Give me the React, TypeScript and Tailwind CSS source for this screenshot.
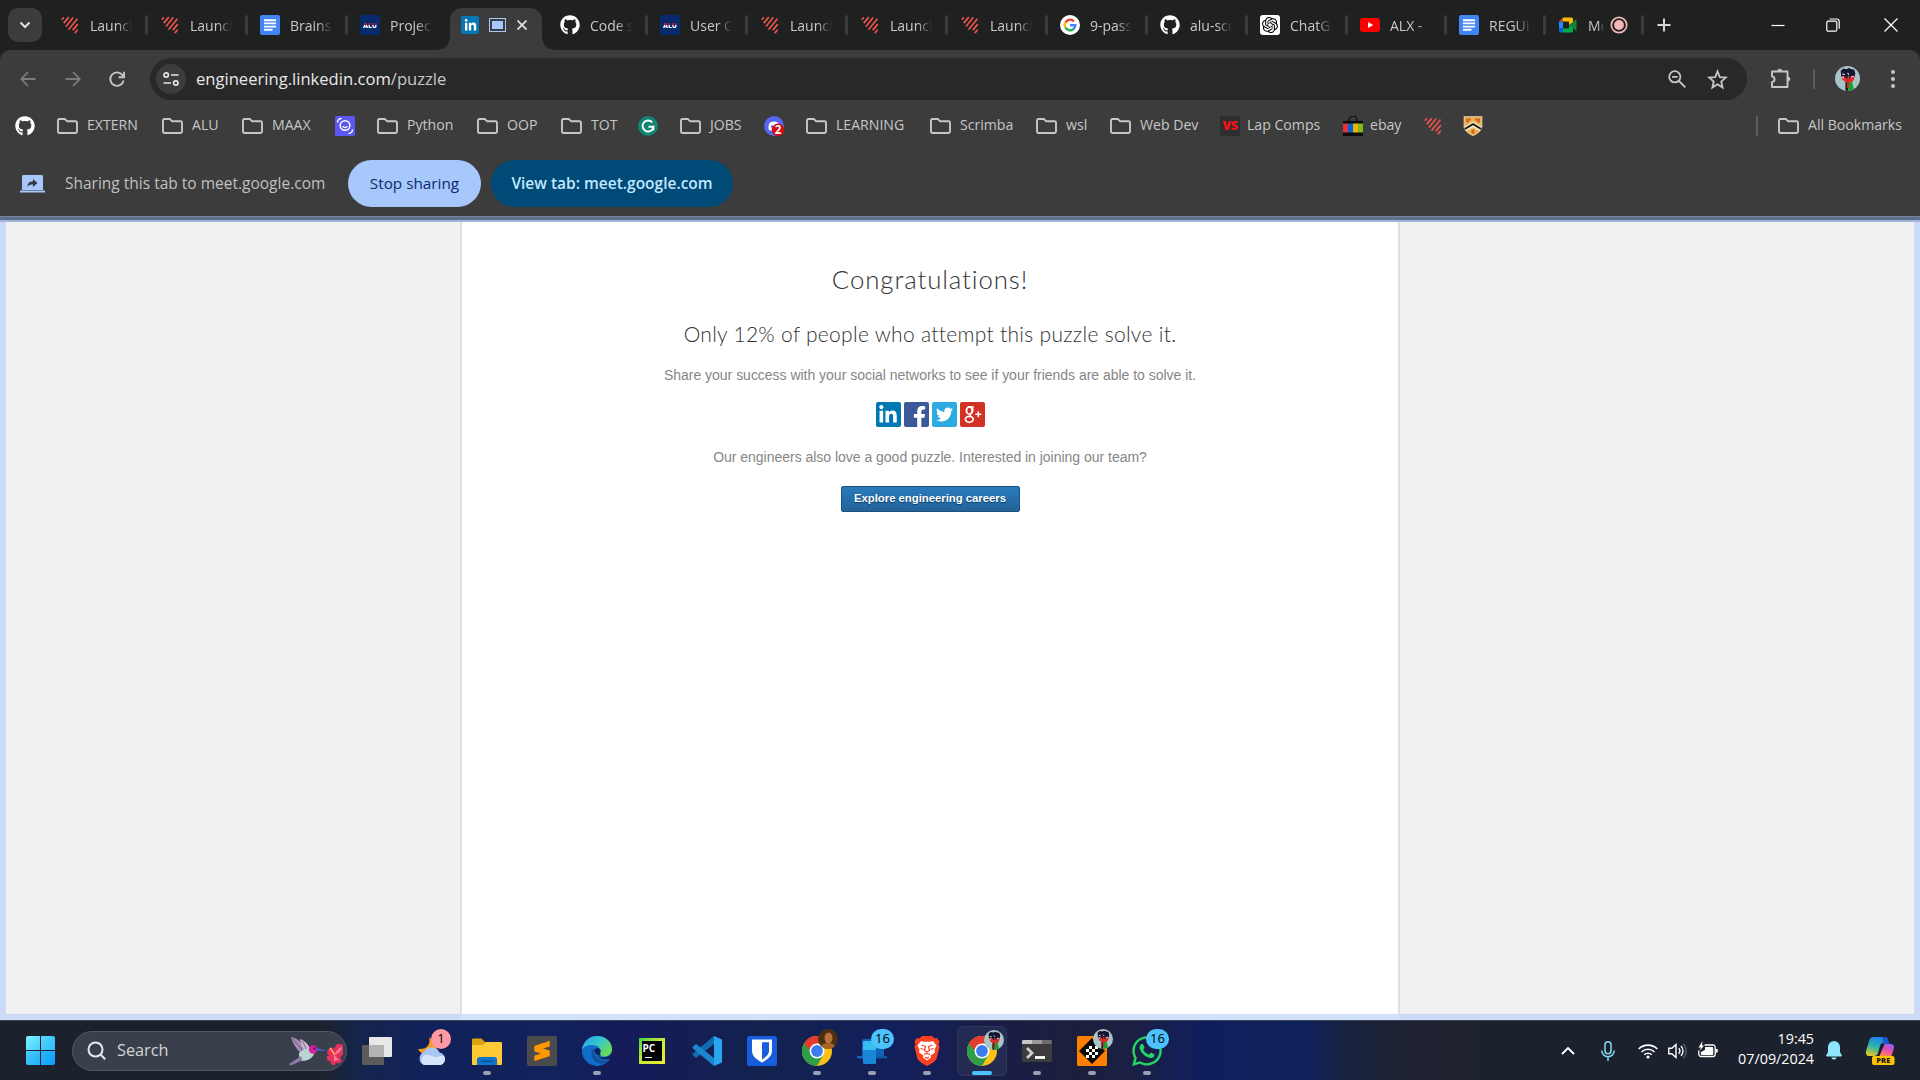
import React from "react";
import { FaGithub, FaLinkedinIn, FaFacebookF, FaTwitter, FaWhatsapp } from "react-icons/fa";
import { SiSublimetext, SiOpenai } from "react-icons/si";

/* ---------- favicons ---------- */

const Stripes = () => (
  <svg viewBox="0 0 20 20" className="size-5 shrink-0" fill="none" stroke="#ef5350" strokeWidth="1.7" strokeLinecap="round">
    <path d="M2.2 4.200 3.400 2.800M4.200 7.600 8.400 2.600M6.400 11 12.800 3M9 14 17 4.200M13.200 14.600 17.400 9.600M15.200 17.600 17.200 15.200" />
  </svg>
);

const Docs = () => (
  <svg viewBox="0 0 20 20" className="size-5 shrink-0">
    <rect width="20" height="20" rx="2" fill="#4285f4" />
    <path d="M4 5.2h12M4 8.4h12M4 11.6h12M4 14.8h8.5" stroke="#fff" strokeWidth="1.9" />
  </svg>
);

const Alu = () => (
  <span className="flex size-5 shrink-0 items-center justify-center bg-[#062a6b] font-['Open_Sans'] text-[7px] leading-none font-extrabold tracking-[-0.2px]">
    <span className="bg-linear-to-b from-[#d8213d] from-50% to-white to-50% bg-clip-text text-transparent">ALU</span>
  </span>
);

const Github = () => <FaGithub className="size-5 shrink-0 text-white" />;

const Google = () => (
  <svg viewBox="0 0 20 20" className="size-5 shrink-0" fill="none" strokeWidth="2.4">
    <circle cx="10" cy="10" r="10" fill="#fff" />
    <path d="M13.9 6.4A5.3 5.3 0 0 0 5.5 7.3" stroke="#ea4335" />
    <path d="M5.5 7.3a5.3 5.3 0 0 0 0 5.4" stroke="#fbbc05" />
    <path d="M5.5 12.7a5.3 5.3 0 0 0 8 1.3" stroke="#34a853" />
    <path d="M13.5 14a5.3 5.3 0 0 0 1.8-3.7H10" stroke="#4285f4" />
  </svg>
);

const Chatgpt = () => (
  <span className="flex size-5 shrink-0 items-center justify-center rounded-[3px] bg-white">
    <SiOpenai className="size-4 text-black" />
  </span>
);

const Youtube = () => (
  <svg viewBox="0 0 20 20" className="size-5 shrink-0">
    <rect y="3" width="20" height="14" rx="3.2" fill="#f00" />
    <path d="M8 7v6l5.2-3z" fill="#fff" />
  </svg>
);

const Meet = () => (
  <svg viewBox="0 0 20 20" className="size-5 shrink-0">
    <path d="M5 2.5h8.5a1.5 1.5 0 0 1 1.500 1.500v4L11 10V6.500H5z" fill="#ffba00" />
    <path d="M5 2.500 1 6.500h4z" fill="#ea4335" />
    <path d="M1 6.500h4v7H1z" fill="#2684fc" />
    <path d="M1 13.500h4v4H2.500A1.500 1.500 0 0 1 1 16z" fill="#0066da" />
    <path d="M5 13.500h6V10l4 2.500V16a1.500 1.500 0 0 1-1.500 1.500H5z" fill="#00ac47" />
    <path d="m11 10 7.500-6v12z" fill="#188038" />
  </svg>
);

/* ---------- tabs ---------- */

const Separator = () => <span className="ml-auto h-5 w-[3px] rounded-full bg-[#3a3b3b]" />;

function Tab({ icon, title, last = false, narrow = false }: { icon: React.ReactNode; title: string; last?: boolean; narrow?: boolean }) {
  return (
    <div className={`flex shrink-0 items-center pl-3 ${narrow ? "w-[99px]" : "w-[100px]"}`}>
      {icon}
      <span className="ml-[10px] w-[42px] overflow-hidden text-[14px] whitespace-nowrap text-[#c7c9c9] [mask-image:linear-gradient(to_right,#000_65%,transparent)]">
        {title}
      </span>
      {!last && <Separator />}
    </div>
  );
}

function ActiveTab() {
  return (
    <div className="flex w-[100px] shrink-0 items-end">
      <span className="-ml-[10px] size-3 shrink-0 bg-[radial-gradient(circle_at_0_0,transparent_11.5px,#3c3c3c_12px)]" />
      <div className="flex h-[42px] w-[92px] shrink-0 items-center rounded-t-[12px] bg-[#3c3c3c] pb-[8px] pl-[11px]">
        <span className="flex size-[18px] items-center justify-center rounded-[2px] bg-[#0577b5]">
          <FaLinkedinIn className="size-[13px] text-white" />
        </span>
        <span className="ml-[10px] flex h-[14px] w-[17px] items-center justify-center border-[1.5px] border-[#a8c7fa]">
          <span className="h-2 w-[11px] bg-[#a8c7fa]" />
        </span>
        <svg viewBox="0 0 10 10" className="ml-[11px] size-[10px]" stroke="#e3e3e3" strokeWidth="1.7">
          <path d="m.5.5 9 9m0-9-9 9" />
        </svg>
      </div>
      <span className="size-3 shrink-0 bg-[radial-gradient(circle_at_100%_0,transparent_11.5px,#3c3c3c_12px)]" />
    </div>
  );
}

function TabStrip() {
  return (
    <div className="flex h-[50px] bg-[#1f2020]">
      <div className="mt-2 ml-2 flex h-[34px] w-[34px] shrink-0 items-center justify-center rounded-[10px] bg-[#3c3c3c]">
        <svg viewBox="0 0 12 8" className="h-2 w-3" fill="none" stroke="#e3e3e3" strokeWidth="2">
          <path d="m1.500 1.500 4.500 4.500 4.500-4.500" />
        </svg>
      </div>
      <div className="ml-[6px] flex">
        <Tab icon={<Stripes />} title="Launch" />
        <Tab icon={<Stripes />} title="Launch" />
        <Tab icon={<Docs />} title="Brainst" />
        <Tab icon={<Alu />} title="Project" last />
        <ActiveTab />
        <Tab icon={<Github />} title="Code s" />
        <Tab icon={<Alu />} title="User C" />
        <Tab icon={<Stripes />} title="Launch" />
        <Tab icon={<Stripes />} title="Launch" />
        <Tab icon={<Stripes />} title="Launch" />
        <Tab icon={<Google />} title="9-pass" />
        <Tab icon={<Github />} title="alu-scr" />
        <Tab icon={<Chatgpt />} title="ChatGP" />
        <Tab icon={<Youtube />} title="ALX - " narrow />
        <Tab icon={<Docs />} title="REGUL" narrow />
        <div className="flex w-[98px] items-center pl-[12px]">
          <Meet />
          <span className="ml-[10px] w-4 overflow-hidden text-[14px] text-[#c7c9c9] [mask-image:linear-gradient(to_right,#000_60%,transparent)]">Me</span>
          <svg viewBox="0 0 18 18" className="ml-[6px] size-[18px]">
            <circle cx="9" cy="9" r="7.700" fill="none" stroke="#f2b8b5" strokeWidth="1.700" />
            <circle cx="9" cy="9" r="4.900" fill="#f2b8b5" />
          </svg>
          <Separator />
        </div>
      </div>
      <svg viewBox="0 0 14 14" className="mt-[18px] ml-[13px] size-[14px]" stroke="#d6d6d6" strokeWidth="2">
        <path d="M7 .5v13M.5 7h13" />
      </svg>
      <div className="ml-auto flex h-[49px] items-center text-white">
        <svg viewBox="0 0 14 14" className="mr-[41px] size-[14px]" stroke="currentColor" strokeWidth="1.2">
          <path d="M.5 7.500h13" />
        </svg>
        <svg viewBox="0 0 14 14" className="mr-[44px] size-[14px]" fill="none" stroke="currentColor" strokeWidth="1.200">
          <rect x=".8" y="3.200" width="10" height="10" rx="1.500" />
          <path d="M3.500 1h7a2.700 2.700 0 0 1 2.700 2.700v7" />
        </svg>
        <svg viewBox="0 0 14 14" className="mr-[22px] size-[14px]" stroke="currentColor" strokeWidth="1.200">
          <path d="m.5.5 13 13m0-13-13 13" />
        </svg>
      </div>
    </div>
  );
}

/* ---------- address bar ---------- */

const Fist = ({ className }: { className: string }) => (
  <svg viewBox="0 0 24 24" className={className}>
    <circle cx="12" cy="12" r="12" fill="#a9c4c6" />
    <path d="M5.500 4.500 8 2.500l3 .5 2.500-1L16 3l2.500.500L19.500 7l-.5 3H6z" fill="#14142f" />
    <path d="M5.500 9.500h13.500L18 13.500l-2 2.500h-5l-3.500-2.500z" fill="#d8302b" />
    <path d="m7 7.500 2.500 1M12 6.500l1.500 2M15 11l3-1.500M6.500 10.500l3 1" stroke="#dfe6ea" strokeWidth="1" fill="none" />
    <path d="M9 11.500 11 9l1 3M14.500 8v4" stroke="#14142f" strokeWidth="1.200" fill="none" />
    <path d="M10 15.500h2.500V24L10 23.500z" fill="#1b1b20" />
    <path d="M13 15.500h3.500l1.500 6.500-4 2h-1.500z" fill="#16a32c" />
    <path d="M11.500 13h2v8h-2z" fill="#d8261f" />
  </svg>
);

function AddressBar() {
  return (
    <div className="flex h-[58px] items-center rounded-t-[10px] bg-[#3c3c3c] pl-5 text-[#c7c7c7]">
      <svg viewBox="0 0 16 16" className="size-4 text-[#7c7c7c]" fill="none" stroke="currentColor" strokeWidth="1.800">
        <path d="M15.500 8H1.500M8 1 1.300 8 8 15" />
      </svg>
      <svg viewBox="0 0 16 16" className="ml-[29px] size-4 text-[#7c7c7c]" fill="none" stroke="currentColor" strokeWidth="1.800">
        <path d="M.5 8h14M8 1l6.700 7L8 15" />
      </svg>
      <svg viewBox="0 0 16 16" className="ml-[28px] size-4" fill="none" stroke="currentColor" strokeWidth="1.900">
        <path d="M14.600 9.500A6.700 6.700 0 1 1 13.500 4.200L14.700 6" />
        <path d="M15 .8v5.400H9.600" />
      </svg>
      <div className="ml-[25px] flex h-[42px] w-[1597px] items-center rounded-full bg-[#282828] pr-[18px] pl-[6px]">
        <span className="flex size-[30px] items-center justify-center rounded-full bg-[#3c3c3c]">
          <svg viewBox="0 0 16 16" className="size-4" fill="none" stroke="#e3e3e3" strokeWidth="1.700">
            <circle cx="3.200" cy="4" r="2.200" />
            <path d="M8 4h7.500M.5 12H8" />
            <circle cx="12.800" cy="12" r="2.200" />
          </svg>
        </span>
        <span className="ml-[10px] text-[16.6px] text-[#c7c7c7]">
          <span className="text-[#e8e8e8]">engineering.linkedin.com</span>/puzzle
        </span>
        <svg viewBox="0 0 18 18" className="ml-auto size-[18px]" fill="none" stroke="currentColor" strokeWidth="1.800">
          <circle cx="6.800" cy="6.800" r="5.600" />
          <path d="m11 11 6.300 6.300M4 6.800h5.600" />
        </svg>
        <svg viewBox="0 0 24 24" className="ml-[20px] size-[23px]" fill="none" stroke="currentColor" strokeWidth="1.900">
          <path d="m12 3.600 2.400 5.900 6.200.5-4.700 4.100 1.400 6.200-5.300-3.300-5.300 3.300 1.400-6.200L3.400 10l6.200-.5z" />
        </svg>
      </div>
      <svg viewBox="0 0 22 22" className="mb-[2px] ml-[23px] size-[22px]" fill="none" stroke="currentColor" strokeWidth="1.900" strokeLinejoin="round">
        <path d="M2 4.500h15.500V20H2v-4.800c3.400-.8 3.400-5 0-5.800z" />
        <path d="M7.500 4a2.300 2.300 0 0 1 4.600 0zM18 9.700a2.300 2.300 0 0 1 0 4.600z" fill="currentColor" stroke="none" />
      </svg>
      <span className="ml-[21px] h-5 w-[2px] bg-[#5c5c5c]" />
      <Fist className="mb-[2px] ml-[20px] size-[25px]" />
      <svg viewBox="0 0 4 18" className="ml-[31px] h-[18px] w-1" fill="currentColor">
        <circle cx="2" cy="2" r="2" />
        <circle cx="2" cy="9" r="2" />
        <circle cx="2" cy="16" r="2" />
      </svg>
    </div>
  );
}

/* ---------- bookmarks ---------- */

const Folder = () => (
  <svg viewBox="0 0 21 16" className="h-4 w-[21px] shrink-0" fill="none" stroke="#c7c7c7" strokeWidth="1.900" strokeLinejoin="round">
    <path d="M1 2.400C1 1.500 1.600 1 2.400 1h5.400l2.200 2.200h8.600c.8 0 1.400.6 1.400 1.400v9c0 .8-.6 1.400-1.400 1.400H2.400C1.600 15 1 14.400 1 13.600z" />
  </svg>
);

const FolderMark = ({ title, className }: { title: string; className: string }) => (
  <div className={`flex shrink-0 items-center gap-[9px] ${className}`}>
    <Folder />
    <span className="pb-[2px]">{title}</span>
  </div>
);

function BookmarksBar() {
  return (
    <div className="flex h-[36px] items-center bg-[#3c3c3c] pl-[15px] text-[14.1px] whitespace-nowrap text-[#c7c7c7]">
      <div className="w-[42px] shrink-0"><Github /></div>
      <FolderMark title="EXTERN" className="w-[105px]" />
      <FolderMark title="ALU" className="w-[80px]" />
      <FolderMark title="MAAX" className="w-[93px]" />
      <div className="w-[42px] shrink-0">
        <svg viewBox="0 0 20 20" className="size-5" fill="none" stroke="#fff" strokeWidth="1.500">
          <rect width="20" height="20" rx="1.500" fill="#5b57f2" stroke="none" />
          <circle cx="10" cy="9.500" r="4.800" />
          <path d="M7.800 10.300c.8 1.700 3.600 1.700 4.400 0M2.500 6.500c0-2 1.500-4 4-4M17.500 13.500c0 2-1.500 4-4 4" />
        </svg>
      </div>
      <FolderMark title="Python" className="w-[100px]" />
      <FolderMark title="OOP" className="w-[84px]" />
      <FolderMark title="TOT" className="w-[77px]" />
      <div className="w-[42px] shrink-0">
        <svg viewBox="0 0 20 20" className="size-5" fill="none" stroke="#fff" strokeWidth="1.900">
          <circle cx="10" cy="10" r="10" fill="#118573" stroke="none" />
          <path d="M14.200 6.300A5.500 5.500 0 1 0 15.500 10.800H10.500M15.300 10.800v3.800" />
        </svg>
      </div>
      <FolderMark title="JOBS" className="w-[84px]" />
      <div className="w-[42px] shrink-0">
        <svg viewBox="0 0 20 20" className="size-5">
          <circle cx="10" cy="10" r="10" fill="#5865f2" />
          <path d="M5 14c-1-2.500-.5-5.500 1-7.500 2.500-1.200 5.500-1.200 8 0 1.500 2 2 5 1 7.500l-2.500.8-.8-1.200H8.300l-.8 1.200z" fill="#fff" />
          <circle cx="8" cy="10.500" r="1.200" fill="#5865f2" />
          <circle cx="14" cy="13.800" r="6.200" fill="#d40c0c" />
          <text x="14" y="18" textAnchor="middle" fontSize="11.500" fontWeight="700" fill="#fff" fontFamily="Open Sans">2</text>
        </svg>
      </div>
      <FolderMark title="LEARNING" className="w-[124px]" />
      <FolderMark title="Scrimba" className="w-[106px]" />
      <FolderMark title="wsl" className="w-[74px]" />
      <FolderMark title="Web Dev" className="w-[110px]" />
      <div className="flex w-[123px] shrink-0 items-center gap-[7px]">
        <span className="flex size-5 items-center justify-center bg-[#2e2e30] font-['Open_Sans'] text-[12.500px] leading-none font-extrabold tracking-[-0.5px] text-[#f01414]">VS</span>
        <span className="pb-[2px]">Lap Comps</span>
      </div>
      <div className="flex w-[80px] shrink-0 items-center gap-[7px]">
        <svg viewBox="0 0 20 20" className="size-5">
          <path d="M6 6V4a4 4 0 0 1 8 0v2" fill="none" stroke="#111" strokeWidth="1.400" />
          <path d="M0 5h20v15H0z" fill="#0b0b0b" />
          <path d="M0 7.500h5v9H0z" fill="#e53238" />
          <path d="M5 7.500h5v9H5z" fill="#0064d2" />
          <path d="M10 7.500h5v9h-5z" fill="#f5af02" />
          <path d="M15 7.500h5v9h-5z" fill="#86b817" />
        </svg>
        <span className="pb-[2px]">ebay</span>
      </div>
      <div className="w-[40px] shrink-0"><Stripes /></div>
      <svg viewBox="0 0 20 20" className="size-5 shrink-0">
        <path d="M1 .5h18v9.500c0 4.500-4 7.500-9 9.800C5 17.500 1 14.500 1 10z" fill="#e9b552" stroke="#d9d0b8" strokeWidth=".7" />
        <path d="M3 2.500h5v2H6v2H3zM12 2.500h5v4h-3v-2h-2zM8.500 13.500h3V17l-1.500 1-1.500-1z" fill="#d9622b" />
        <path d="m1.800 11.500 8.200-5 8.200 5M2.800 14.500l7.200-4.300 7.200 4.300" fill="none" stroke="#f3ead0" strokeWidth="1.800" />
        <path d="m1.800 13 8.200-5 8.200 5" fill="none" stroke="#1c1a1a" strokeWidth="1.900" />
      </svg>
      <div className="mr-[18px] ml-auto flex items-center">
        <span className="h-5 w-[2px] bg-[#5f5f5f]" />
        <span className="w-[20px]" />
        <Folder />
        <span className="ml-[9px] pb-[2px]">All Bookmarks</span>
      </div>
    </div>
  );
}

function SharingBar() {
  return (
    <div className="flex h-[72px] items-center bg-[#3c3c3c] pt-[7px] pl-[20px]">
      <svg viewBox="0 0 25 18" className="h-[18px] w-[25px] shrink-0" fill="#a8c7fa">
        <path d="M2 1.500C2 .6 2.600 0 3.500 0h18c.9 0 1.500.6 1.500 1.500V15H2zM0 15.500h25V17.500H0z" />
        <path d="M7.500 11.500c.3-3.500 2.500-5 5.500-5.200V4l4.500 4-4.500 4V9.500c-2.300 0-4 .6-5.500 2z" fill="#33373d" />
      </svg>
      <span className="ml-5 w-[283px] text-[15.5px] text-[#c0c0c0]">Sharing this tab to meet.google.com</span>
      <button className="h-[47px] w-[133px] rounded-full bg-[#a8c7fa] text-[15.300px] font-medium text-[#062e6f]">Stop sharing</button>
      <button className="ml-[10px] h-[47px] w-[242px] rounded-full bg-[#004a77] text-[15.5px] font-semibold text-[#c2e7ff]">View tab: meet.google.com</button>
    </div>
  );
}

/* ---------- page ---------- */

function Page() {
  return (
    <div className="flex h-[804px] flex-col">
      <div className="h-[6px] shrink-0 border-t border-b-2 border-t-[#74839f] border-b-[#a0b3d9] bg-[#5f6f8c]" />
      <div className="flex h-[792px] justify-center border-x-[6px] border-[#cbdaf6] bg-[#f1f1f1]">
        <main className="-ml-[60px] flex w-[940px] flex-col items-center border-x-2 border-[#e0e0e0] bg-white pt-[38px]">
          <h1 className="font-['Lato'] text-[25.8px] leading-[38px] font-light tracking-[0.9px] text-[#333]">Congratulations!</h1>
          <h2 className="mt-[18px] font-['Lato'] text-[21px] leading-[36px] font-light tracking-[0.3px] text-[#333]">
            Only 12% of people who attempt this puzzle solve it.
          </h2>
          <p className="mt-[13px] font-['Liberation_Sans'] text-[14px] leading-5 tracking-[-0.02px] text-[#868686]">
            Share your success with your social networks to see if your friends are able to solve it.
          </p>
          <div className="mt-[17px] flex gap-[3px] text-white">
            <span className="flex size-[25px] items-center justify-center rounded-[2px] bg-[#0077b5]">
              <FaLinkedinIn className="size-[20px]" />
            </span>
            <span className="flex size-[25px] items-end justify-end rounded-[2px] bg-[#3b5998] pr-[2px]">
              <FaFacebookF className="h-[21px] w-[15px]" />
            </span>
            <span className="flex size-[25px] items-center justify-center rounded-[2px] bg-[#2caae1]">
              <FaTwitter className="size-[17px]" />
            </span>
            <svg viewBox="0 0 25 25" className="size-[25px]" fill="none" stroke="#fff">
              <rect width="25" height="25" rx="2" fill="#d23126" stroke="none" />
              <ellipse cx="9.300" cy="8.500" rx="2.900" ry="3.600" strokeWidth="1.800" />
              <path d="M9.500 4.900h4.500M11.500 5c1.500 1.500 1.800 3.800.5 5.500l-2 1.800c-.5.800.2 1.300 1 1.900" strokeWidth="1.400" />
              <ellipse cx="9.300" cy="17.300" rx="3.900" ry="3" strokeWidth="1.700" />
              <path d="M18.300 9.300v6M15.300 12.300h6" strokeWidth="1.400" />
            </svg>
          </div>
          <p className="mt-[20px] font-['Liberation_Sans'] text-[14px] leading-5 tracking-[-0.02px] text-[#868686]">
            Our engineers also love a good puzzle. Interested in joining our team?
          </p>
          <button className="mt-[19px] h-[26px] w-[179px] rounded-[2px] border border-[#1b4f7c] bg-linear-to-b from-[#287bbc] to-[#23639a] pb-[1px] font-['Liberation_Sans'] text-[11.3px] leading-none font-bold text-white [text-shadow:0_1px_1px_#0d3a60]">
            Explore engineering careers
          </button>
        </main>
      </div>
      <div className="flex h-[6px] bg-[#cbdaf6]">
        <span className="ml-[461px] w-[938px] bg-[#d2e2fc]" />
      </div>
    </div>
  );
}

/* ---------- taskbar ---------- */

const ChromeLogo = () => (
  <svg viewBox="0 0 30 30" className="size-[30px]">
    <circle cx="15" cy="15" r="15" fill="#fbc116" />
    <path d="M15 15 2 7.500A15 15 0 0 0 15 30l6.500-11.200z" fill="#2f9e48" />
    <path d="M15 15H8.500L2 7.500A15 15 0 0 1 28 7.500H15z" fill="#e33b2e" />
    <circle cx="15" cy="15" r="7.500" fill="#fff" />
    <circle cx="15" cy="15" r="5.900" fill="#3b7ded" />
  </svg>
);

function TaskbarApp({ children, running = false, active = false, badge, avatar }: { children: React.ReactNode; running?: boolean; active?: boolean; badge?: React.ReactNode; avatar?: React.ReactNode }) {
  return (
    <div className="flex w-[55px] shrink-0 justify-center">
      <div className={`relative flex h-[50px] w-[50px] flex-col items-center rounded-md ${active ? "border border-[#30375c] bg-[#242b52] pt-[9px]" : "pt-[10px]"}`}>
        <div className="flex size-[30px] items-center justify-center">{children}</div>
        {running && <span className={`mt-[5px] h-1 rounded-full ${active ? "w-5 bg-[#4cc2ff]" : "w-2 bg-[#9a9fb4]"}`} />}
        {badge && <div className="absolute top-[3px] left-[24px] flex h-5 min-w-5 items-center justify-center rounded-full text-[13px] text-black">{badge}</div>}
        {avatar && <div className="absolute top-[3px] left-[26px]">{avatar}</div>}
      </div>
    </div>
  );
}

function Taskbar() {
  return (
    <div className="flex h-[60px] items-center border-t border-[#3c434f] bg-[linear-gradient(90deg,#1c222d_0,#1c222d_320px,#14244c_360px,#11225a_420px,#11225c_560px,#151b59_620px,#13224f_760px,#131f5c_900px,#1a1e45_1000px,#1c1f3c_1080px,#1a1f45_1140px,#0f1f5e_1200px,#0f2158_1310px,#18223c_1350px,#1f2130_1420px,#1c222d_1490px,#1c222d_1920px)]">
      <div className="ml-[26px] grid size-[29px] shrink-0 grid-cols-2 gap-px">
        <span className="rounded-tl-[2px] bg-linear-to-br from-[#7df3ff] to-[#45cdfb]" />
        <span className="rounded-tr-[2px] bg-linear-to-br from-[#55dafc] to-[#2cb8fa]" />
        <span className="rounded-bl-[2px] bg-linear-to-br from-[#46cefb] to-[#22adf9]" />
        <span className="rounded-br-[2px] bg-linear-to-br from-[#2bb9fb] to-[#0a9cf9]" />
      </div>
      <div className="ml-[17px] flex h-10 w-[275px] shrink-0 items-center rounded-full border border-[#515762] bg-[#3a404b] pl-[14px]">
        <svg viewBox="0 0 19 19" className="size-[19px]" fill="none" stroke="#e6e7e9" strokeWidth="2">
          <circle cx="8.500" cy="8.500" r="7" />
          <path d="m13.500 13.500 4.700 4.700" />
        </svg>
        <span className="ml-[11px] text-[16.3px] text-[#d3d5d8]">Search</span>
        <svg viewBox="0 0 56 30" className="mr-[2px] ml-auto h-[30px] w-[56px]">
          <path d="M3 1c5 1 13 5 14 14l-3 3C9 14 5 8 3 1z" fill="#a58bb5" />
          <path d="M12 3c5 2 9 6 10 10l-4 5C15 13 13 8 12 3z" fill="#cdb6d6" />
          <path d="M5 3c3 4 8 8 10 13M14 5c2 3 4 6 4 9" stroke="#5f4b73" strokeWidth=".8" fill="none" />
          <path d="M11 17c4-4 9-5 13-5l3 3c-1 6-6 10-13 10-3 0-3-4-3-8z" fill="#b9d6d4" />
          <path d="M13 20 1 28l1.500 1.500 5-2 7-3.500z" fill="#8f7aa5" />
          <circle cx="25" cy="13.500" r="4.200" fill="#d81fa2" />
          <circle cx="26.500" cy="12.500" r=".9" fill="#1a1030" />
          <path d="m28.500 12 11 3-11-.5z" fill="#4a62c9" />
          <path d="M40 14c2-3 4-3 6-2l-1 4 3-7c2-1.500 5-1 7-.5v10l-3 3 2 3c-1 3-4 3.500-6 2l-1 2.500c-3 .5-5-1-4.500-4-3 .5-4-2-3.500-5h3c-3-1-3.500-3-2-6z" fill="#e5315f" />
          <path d="M47 18c1-3 4-6 7-7-1 4-3 7-7 7zM46 19l5 5-5 1z" fill="#ff7d93" />
          <path d="m42 12 5 7" stroke="#ffb45c" strokeWidth="1.400" />
        </svg>
      </div>
      <div className="ml-[2.500px] flex">
        <TaskbarApp>
          <svg viewBox="0 0 30 30" className="size-[30px]">
            <rect x="7" y="1" width="23" height="20" rx="1" fill="#e8e8e8" />
            <rect x="0" y="9" width="22" height="20" rx="1" fill="#5b5b5b" />
            <path d="M7 9h15v12H7z" fill="#b3b3b3" />
          </svg>
        </TaskbarApp>
        <TaskbarApp badge={<span className="flex size-5 items-center justify-center rounded-full bg-[#ff99a4]">1</span>}>
          <svg viewBox="0 0 30 30" className="size-[30px]">
            <path d="M12 1c2 7-2 13-11 12 2 4 6 6 10 5 6 0 9-4 9-9z" fill="#f59b1c" />
            <path d="M7 29a7 7 0 0 1 0-13 8.500 8.500 0 0 1 15.500 0.500A6.500 6.500 0 0 1 23.500 29z" fill="#a9c6f4" />
            <path d="M7 29a6 6 0 0 1 1-10c4-1 7 2 10 2s6-2 9-1a6 6 0 0 1-3.500 9z" fill="#d6e4fb" />
          </svg>
        </TaskbarApp>
        <TaskbarApp running>
          <svg viewBox="0 0 30 30" className="size-[30px]">
            <path d="M0 4c0-1 .6-1.500 1.500-1.500h8L13 6H28c1 0 1.500.6 1.500 1.500V12H0z" fill="#dfa00d" />
            <path d="M0 9h11l3-3h14.500c1 0 1.500.6 1.500 1.500V28c0 .6-.4 1-1 1H1c-.6 0-1-.4-1-1z" fill="#ffca35" />
            <path d="M5 29v-5.500c0-1.500 1-2.500 2.500-2.500h15c1.500 0 2.500 1 2.500 2.500V29z" fill="#0f75cb" />
            <path d="M9 25.300h12" stroke="#0a4f92" strokeWidth="1.500" />
          </svg>
        </TaskbarApp>
        <TaskbarApp>
          <span className="flex size-[30px] items-center justify-center rounded-[2px] bg-[#4b4b4b]">
            <SiSublimetext className="size-[20px] text-[#ff9800]" />
          </span>
        </TaskbarApp>
        <TaskbarApp running>
          <svg viewBox="0 0 30 30" className="size-[30px]">
            <defs>
              <linearGradient id="edgeTop" x1="0" x2="1" y1="0" y2=".6">
                <stop offset="0" stopColor="#27a6e8" />
                <stop offset=".55" stopColor="#35c6cf" />
                <stop offset="1" stopColor="#6bdc52" />
              </linearGradient>
            </defs>
            <circle cx="15" cy="15" r="15" fill="#0f6fc8" />
            <path d="M0 14C1 6 7 0 15 0c9 0 15 6 15 13 0 5-4 7.500-8 7.500-3 0-4.500-1.500-3.500-3C20 14 17 9 10 9 5 9 1.500 11 0 14z" fill="url(#edgeTop)" />
            <path d="M11 12c-4 5-1 14 7 15.500 4 .5 8-1.500 9.500-4-6 3-15 1-16.500-11.500z" fill="#12529c" />
            <path d="M30 16v6l-3 .8c-4 1.700-9 .6-11.500-3 1.500 1.400 4 1.700 6.500 1.500 4 0 7-2 8-5.300z" fill="#131d5a" />
            <path d="M12.500 14c2-3.500 6-2 6 1.500-1 1.500-1 2.500.5 4-3 .5-7-2-6.500-5.500z" fill="#131d5a" />
          </svg>
        </TaskbarApp>
        <TaskbarApp>
          <div className="mr-px flex size-[26px] items-center justify-center bg-linear-to-br from-[#21d745] via-[#c8e83a] to-[#f0ef2a]">
            <div className="flex size-[20px] flex-col bg-black pt-[2px] pl-[1px] text-[10px] leading-[10px] font-bold text-white">
              PC
              <span className="mt-[4px] ml-[2px] h-[1.500px] w-[7px] bg-white" />
            </div>
          </div>
        </TaskbarApp>
        <TaskbarApp>
          <svg viewBox="0 0 30 30" className="size-[30px]">
            <path d="M22 0v8L4 22l-3-2.500c-.7-.6-.7-1.300 0-2z" fill="#0f6cb0" />
            <path d="M22 30v-8L4 8l-3 2.500c-.7.600-.7 1.300 0 2z" fill="#1b87cf" />
            <path d="m22 0 7 3c.7.300 1 .8 1 1.500v21c0 .700-.3 1.200-1 1.500l-7 3z" fill="#2aa6f0" />
          </svg>
        </TaskbarApp>
        <TaskbarApp>
          <svg viewBox="0 0 30 30" className="size-[30px]">
            <rect width="30" height="30" rx="2.500" fill="#175ddc" />
            <path d="M5 3.500h20V15c0 5-5 9-10 11.500C10 24 5 20 5 15z" fill="#fff" />
            <path d="M15 6.200h7V15c0 3.500-3.500 6.500-7 8.500z" fill="#175ddc" />
          </svg>
        </TaskbarApp>
        <TaskbarApp
          running
          avatar={
            <svg viewBox="0 0 20 20" className="size-5">
              <circle cx="10" cy="10" r="10" fill="#4d2f12" />
              <ellipse cx="10.500" cy="9" rx="4" ry="5.500" fill="#b9713c" />
              <path d="M3 17c2-4 12-4 14 0-4 4-10 4-14 0z" fill="#a8651f" />
            </svg>
          }
        >
          <ChromeLogo />
        </TaskbarApp>
        <TaskbarApp running badge={<span className="flex h-5 w-[23px] items-center justify-center rounded-full bg-[#4cc2ff]">16</span>}>
          <svg viewBox="0 0 30 30" className="size-[30px]">
            <rect x="5" y="3" width="22" height="18" rx="1.500" fill="#1164b8" />
            <path d="M5 20h25v2.500H5z" fill="#0b5aa8" />
            <rect x="6" y="5" width="13" height="23" rx="1.500" fill="#1a86d6" />
            <path d="M6 6.500C6 5.600 6.600 5 7.500 5h10c.9 0 1.500.6 1.500 1.500V14H6z" fill="#37bdf0" />
            <path d="M0 20h6v2.500H0z" fill="#1164b8" />
          </svg>
        </TaskbarApp>
        <TaskbarApp running>
          <svg viewBox="0 0 26 30" className="h-[30px] w-[26px]">
            <path d="M8 0h10l2.500 2.500L23 2l2.500 3.500-1 2.500 1 3-3 12c-2 3-6 5-9.500 7-3.500-2-7.500-4-9.500-7L.5 11l1-3-1-2.500L3 2l2.500.5z" fill="#fb4120" />
            <path d="m7 5 3 .8h6L19 5l3.500 4.500-2 4 .5 3-4.500 3 .500 2-4 3-4-3 .500-2L5 16.500l.5-3-2-4z" fill="#fff" />
            <path d="m7.500 9 4 1.500-1 4 2.500 1.500 2.500-1.500-1-4 4-1.500M6.500 12.500l3 1M19.500 12.500l-3 1M10 18.500l3-1 3 1M11 21l2 1.200 2-1.200" fill="none" stroke="#fb4120" strokeWidth="1.200" />
          </svg>
        </TaskbarApp>
        <TaskbarApp running active avatar={<Fist className="size-5" />}>
          <ChromeLogo />
        </TaskbarApp>
        <TaskbarApp running>
          <svg viewBox="0 0 30 30" className="size-[30px]">
            <rect y="4" width="30" height="22" rx="1.500" fill="#3c3c3c" />
            <path d="M0 8V5.500C0 4.600.6 4 1.500 4H10v4z" fill="#c9c9c9" />
            <path d="M10 4h10v4H10z" fill="#9b9b9b" />
            <path d="M20 4h8.500c.9 0 1.500.6 1.500 1.500V8H20z" fill="#6d6d6d" />
            <path d="m5 12 5 5-5 5" fill="none" stroke="#cfcfcf" strokeWidth="2.800" />
            <path d="M13 21.500h10" stroke="#fff" strokeWidth="2.800" />
          </svg>
        </TaskbarApp>
        <TaskbarApp running avatar={<Fist className="size-5" />}>
          <svg viewBox="0 0 30 30" className="size-[30px]">
            <rect width="30" height="30" rx="1.500" fill="#ff8000" />
            <path d="m15 2 13 13-13 13L2 15z" fill="#0c0c0c" />
            <path d="M12 10h3v3h-3zM15 13h3v3h-3zM9 13h3v3H9zM12 16h3v3h-3zM18 16h3v3h-3zM15 19h3v3h-3zM18 10h3v3h-3zM9 19h3v3H9z" fill="#fff" />
          </svg>
        </TaskbarApp>
        <TaskbarApp running badge={<span className="flex h-5 w-[23px] items-center justify-center rounded-full bg-[#4cc2ff]">16</span>}>
          <FaWhatsapp className="size-[34px] shrink-0 text-[#25d366]" />
        </TaskbarApp>
      </div>

      <div className="mr-[25px] ml-auto flex items-center text-white">
        <svg viewBox="0 0 14 9" className="h-[9px] w-[14px]" fill="none" stroke="currentColor" strokeWidth="1.900">
          <path d="m1 8 6-6 6 6" />
        </svg>
        <svg viewBox="0 0 14 20" className="ml-[26px] h-5 w-[14px]" fill="none" stroke="#83dcf2" strokeWidth="1.500">
          <rect x="4" y=".8" width="6" height="12" rx="3" />
          <path d="M.8 9.500a6.200 6.200 0 0 0 12.400 0M7 15.800V20" />
        </svg>
        <svg viewBox="0 0 20 16" className="ml-[23px] h-4 w-5" fill="none" stroke="currentColor" strokeWidth="1.600">
          <path d="M.7 6a13 13 0 0 1 18.600 0M3.500 9a9.200 9.200 0 0 1 13 0M6.300 11.700a5.300 5.300 0 0 1 7.400 0" />
          <circle cx="10" cy="14" r="1.600" fill="currentColor" stroke="none" />
        </svg>
        <svg viewBox="0 0 20 16" className="ml-[10px] h-4 w-5" fill="none" stroke="currentColor" strokeWidth="1.400">
          <path d="M.8 5.300h3L8 1.500v13l-4.200-3.800h-3zM10.700 5.300a4 4 0 0 1 0 5.400M13 3a7.300 7.300 0 0 1 0 10" />
          <path d="M15.500 1a10.500 10.500 0 0 1 0 14" stroke="#5e636d" />
        </svg>
        <svg viewBox="0 0 20 18" className="mb-[2px] ml-[10px] h-[18px] w-5" fill="none" stroke="currentColor" strokeWidth="1.300">
          <path d="M6.500 4H15a2.200 2.200 0 0 1 2.200 2.200v7.100a2.200 2.200 0 0 1-2.200 2.200H3a2.200 2.200 0 0 1-2.200-2.200V9.500" />
          <path d="M7 6h7.500l.7.700v6.500l-.7.800h-11l-.7-.8v-2l4.200-2.500zM17.500 8h2.200v3.500h-2.200zM4.500 0 .5 6.500H3L1.700 10 6 4.500H4z" fill="currentColor" stroke="none" />
        </svg>
        <div className="mb-[3px] ml-[20px] flex w-[76px] flex-col items-end text-[14.300px] leading-5">
          <span>19:45</span>
          <span>07/09/2024</span>
        </div>
        <svg viewBox="0 0 16 19" className="ml-[12px] h-[19px] w-4" fill="#8de6fb">
          <path d="M8 0a6 6 0 0 1 6 6v5l1.800 3.200c.3.600 0 1.300-.8 1.300H1c-.8 0-1.100-.7-.8-1.300L2 11V6a6 6 0 0 1 6-6zM5.200 16.500h5.600a2.900 2.900 0 0 1-5.600 0z" />
        </svg>
        <svg viewBox="0 0 29 29" className="ml-[23px] h-[29px] w-[30px]">
          <defs>
            <linearGradient id="cpLeft" x1=".6" x2=".2" y1="0" y2="1">
              <stop offset="0" stopColor="#1f7ff0" />
              <stop offset=".5" stopColor="#2ab3b0" />
              <stop offset="1" stopColor="#e8c81f" />
            </linearGradient>
            <linearGradient id="cpRight" x1=".6" x2=".2" y1="0" y2="1">
              <stop offset="0" stopColor="#9b5cf0" />
              <stop offset=".5" stopColor="#e84fa5" />
              <stop offset="1" stopColor="#ff8a4a" />
            </linearGradient>
          </defs>
          <path d="M8 1h11c2 0 3 1 3.500 3L23 7h-5c-2 0-3 1-3.500 3l-2 7c-.5 2-2 3-4 3H3.500C1 20 0 18 .5 15L4 4c.5-2 2-3 4-3z" fill="url(#cpLeft)" />
          <path d="M17 1h2c2 0 3 1 3.500 3L24 8h-6z" fill="#1b56cf" />
          <path d="M19 8h6c3 0 4 2 3.300 4.500L26 20H14z" fill="url(#cpRight)" />
          <rect x="6.500" y="20" width="22.500" height="9" rx="2" fill="#ffc400" />
          <text x="17.800" y="27.300" textAnchor="middle" fontSize="7.500" fontWeight="800" fill="#1a1a1a" fontFamily="Open Sans">PRE</text>
        </svg>
      </div>
    </div>
  );
}

export default function App() {
  return (
    <div className="flex h-[1080px] w-[1920px] flex-col overflow-hidden bg-[#1f2020] font-['Open_Sans',sans-serif]">
      <TabStrip />
      <AddressBar />
      <BookmarksBar />
      <SharingBar />
      <Page />
      <Taskbar />
    </div>
  );
}
